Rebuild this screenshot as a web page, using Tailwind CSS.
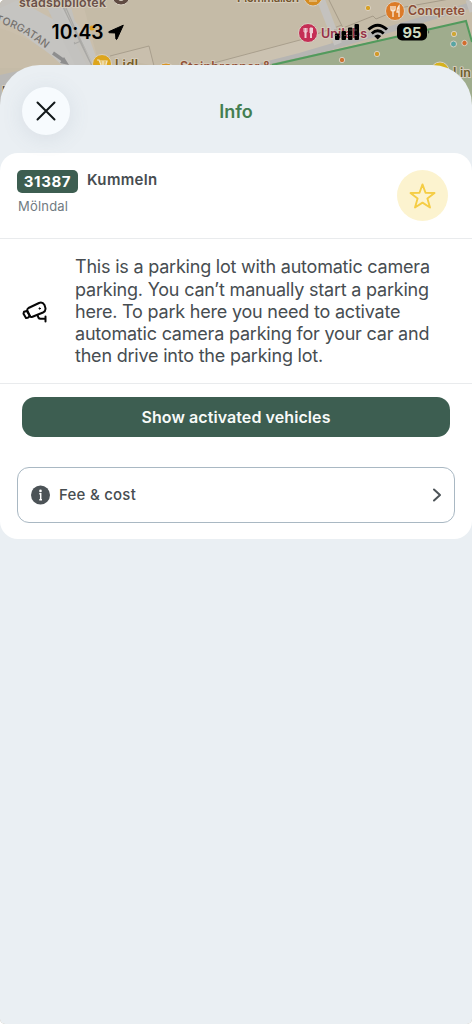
<!DOCTYPE html>
<html lang="en">
<head>
<meta charset="utf-8">
<meta name="viewport" content="width=device-width, initial-scale=1">
<title>Info</title>
<script src="https://cdn.jsdelivr.net/npm/@tailwindcss/browser@4"></script>
</head>
<body class="bg-white font-['Inter','Liberation_Sans',sans-serif]">
<div class="relative w-[472px] h-[1024px] overflow-hidden rounded-[5px] bg-[#c5bba7]">
  <!-- Map behind the sheet -->
  <svg class="absolute inset-0" width="472" height="110" viewBox="0 0 472 110" font-family="Inter, 'Liberation Sans', sans-serif">
    <rect width="472" height="110" fill="#c5bba7"/>
    <path d="M0 0H82L100 68H0Z" fill="#cabfac"/>
    <path d="M0 0H17L22 16L0 20Z" fill="#c5c2bd"/>
    <path d="M18 0L58 22L62 5L90 40L100 68L62 68Q30 36 0 20V8Z" fill="#c5c4c1"/>
    <path d="M58 3L49 15L62 24Z" fill="#c8bda9"/>
    <path d="M0 28Q42 42 64 68H0Z" fill="#c8bda9"/>
    <path d="M0 75Q14 72 30 68V110H0Z" fill="#b9b8b6"/>
    <path d="M50 0L83 68" stroke="#c3c2bf" stroke-width="12" fill="none"/>
    <path d="M61 0L94 68M74 43L81 40" stroke="#aaa9a6" stroke-width="1.5" fill="none"/>
    <path d="M66 0L77 40L92 68" stroke="#c3c1bc" stroke-width="6" fill="none"/>
    <path d="M62 5L90 62M74 44L81 41M66 8L80 40L92 66" stroke="#a9a8a5" stroke-width="1.200" fill="none"/>
    <path d="M110 56L149 46L154 66" stroke="#a99f8d" stroke-width="1" fill="#c9bfad"/>
    <path d="M53 53L63 60" stroke="#8e8e8e" stroke-width="3.400"/><path d="M60 63L69 65L64 57Z" fill="#8e8e8e"/>
    <path d="M210 64L300 40L335 28L330 48L250 66Z" fill="#cbc2b1"/>
    <path d="M210 64L300 40L342 25" stroke="#a99f8d" fill="none"/>
    <path d="M252 68L300 56L472 5" stroke="#b6b5b3" stroke-width="6" fill="none"/>
    <path d="M321 0L338 44" stroke="#c4c2bf" stroke-width="8" fill="none"/>
    <path d="M329 0L343 28L373 16L376 19L405 7L472 -5" stroke="#a59b88" fill="none"/>
    <path d="M466 21L472 42V110H270V64Z" fill="#9fac8d"/>
    <path d="M272 65L466 21L472 42" stroke="#529a5d" stroke-width="2" fill="none"/>
    <path d="M468 0L472 12" stroke="#c4c2bf" stroke-width="5"/>
    <g font-weight="600" stroke="#d5ccbc" stroke-width="2" paint-order="stroke" stroke-linejoin="round">
      <text x="19" y="7" font-size="12.500" fill="#6b5149" textLength="87">stadsbibliotek</text>
      <text x="237" y="2" font-size="12" fill="#72552f" textLength="62">Plommallen</text>
      <text x="115" y="69" font-size="12.500" fill="#765b24" textLength="23">Lidl</text>
      <text x="180" y="71" font-size="12.500" fill="#925136" textLength="91">Steinbrenner &amp;</text>
      <text x="408" y="15" font-size="12.500" fill="#8b4c36" textLength="57">Conqrete</text>
      <text x="321" y="38" font-size="12.500" fill="#962f48" textLength="46">Unilabs</text>
      <text x="453" y="77" font-size="12.500" fill="#705f2d" textLength="18">Lin</text>
      <text x="2" y="94" font-size="11" fill="#555">N</text>
    </g>
    <path id="street" d="M-5 22Q24 29 52 54" fill="none"/>
    <text font-size="10.500" font-weight="500" fill="#77736f"><textPath href="#street" textLength="58">TORGATAN</textPath></text>
    <g stroke="#d8d0c3" stroke-width="1">
      <circle cx="121" cy="-4" r="9" fill="#604b42"/>
      <circle cx="102" cy="64" r="9.500" fill="#dda51c"/>
      <circle cx="166" cy="72" r="9" fill="#d99524"/>
      <circle cx="313" cy="-3" r="9" fill="#d58c22"/>
      <circle cx="308" cy="33" r="9.500" fill="#c52e55"/>
      <circle cx="395" cy="11" r="9.500" fill="#dc7b28"/>
      <circle cx="440" cy="71" r="9" fill="#d5b21e"/>
      <circle cx="368" cy="8" r="2.700" fill="#d8a126"/>
      <circle cx="377" cy="54" r="2.700" fill="#d39a29"/>
      <circle cx="342" cy="60" r="2.700" fill="#cf7433"/>
      <circle cx="454" cy="34" r="2.700" fill="#cfa735"/>
      <circle cx="453.500" cy="44" r="3" fill="#58a5a4"/>
      <circle cx="464.500" cy="43" r="2.700" fill="#d36c2d"/>
    </g>
    <circle cx="92" cy="28" r="2.500" fill="#dda126"/>
    <circle cx="121" cy="-2" r="3" fill="#d8cfc3"/>
    <path d="M97 60H99L101 65H106L107 61H99M100 63H107M103 61V65" stroke="#f2e6c6" stroke-width="1.200" fill="none"/>
    <path d="M308 -1H318M309 1H317" stroke="#f1dcb6" stroke-width="1.200"/>
    <path d="M305.500 28V38M311 28V38" stroke="#efccd4" stroke-width="2"/><path d="M304 28V32H307V28M310 28H312.500V33H310Z" stroke="#efccd4" fill="none"/>
    <path d="M391 6V9Q391 11 393 11Q395 11 395 9V6M393 6V17M399 17V6Q397 8 397 12H399" stroke="#f7e5d3" stroke-width="1.400" fill="none"/>
  </svg>

  <!-- Status bar -->
  <svg class="absolute inset-0" width="472" height="65" viewBox="0 0 472 65" font-family="Inter, 'Liberation Sans', sans-serif">
    <text x="51.500" y="39.200" font-size="19.800" font-weight="600" textLength="52" lengthAdjust="spacingAndGlyphs">10:43</text>
    <path d="M123.300 25.200L109 31.600Q108.200 32.300 109.200 32.700L115.500 33L115.900 39Q116.400 40 117 39Z" stroke="#000" stroke-width="1" stroke-linejoin="round"/>
    <g>
      <rect x="335" y="33.500" width="4.500" height="6.500" rx="1"/><rect x="341.500" y="31" width="4.500" height="9" rx="1"/><rect x="348" y="27.500" width="4.500" height="12.500" rx="1"/><rect x="354.500" y="24" width="4.500" height="16" rx="1"/>
      <path d="M334 30H359M334 35.500H359" stroke="#9d8575" stroke-width=".5" stroke-dasharray="3 2"/>
    </g>
    <path d="M368.500 29.500Q377.700 21 387 29.500" fill="none" stroke="#000" stroke-width="3"/>
    <path d="M371.800 33.500Q377.700 28 383.700 33.500" fill="none" stroke="#000" stroke-width="2.800"/>
    <path d="M374.200 36Q377.700 33 381.200 36L377.700 39.500Z"/>
    <rect x="397" y="23.500" width="30" height="17" rx="5"/><path d="M428.500 30V34Q430 32 428.500 30Z"/>
    <text x="402.500" y="37.500" font-size="15" font-weight="700" fill="#cfdcc2" textLength="19" lengthAdjust="spacingAndGlyphs">95</text>
  </svg>

  <!-- Sheet -->
  <main class="relative mt-[65px] h-[959px] rounded-t-[40px] bg-[#eaeff3] overflow-hidden text-[#474d51]">
    <header class="grid h-[88px] grid-cols-[1fr_auto_1fr] items-center pl-[22px] pr-[22px] pt-1">
      <button aria-label="Close" class="flex size-12 items-center justify-center rounded-full bg-[#f7fbfe] shadow-[0_3px_22px_rgba(90,115,140,0.13)]">
        <svg width="20" height="20" viewBox="0 0 20 20" fill="none" stroke="#111719" stroke-width="2" stroke-linecap="round"><path d="M1.500 1.500L18.500 18.500M18.500 1.500L1.500 18.500"/></svg>
      </button>
      <h1 class="pt-0.5 text-[18px] font-semibold leading-6 text-[#447e51]">Info</h1>
      <span></span>
    </header>

    <section class="h-[386px] rounded-[18px] bg-white">
      <div class="flex h-[86px] justify-between border-b border-[#e9ebed] pl-[17px] pr-6 pt-[17px]">
        <div>
          <div class="flex gap-[9px]">
            <span class="flex h-[23px] w-[61px] items-center justify-center rounded-[5px] bg-[#3d5e51] pt-px text-[15px] font-bold tracking-[0.6px] text-white">31387</span>
            <span class="text-[15px] font-semibold leading-5 tracking-[0.33px]">Kummeln</span>
          </div>
          <p class="mt-1 pl-px text-[13px] leading-[18px] tracking-[0.2px] text-[#717b82]">Mölndal</p>
        </div>
        <div class="flex size-[51px] items-center justify-center rounded-full bg-[#fcf3cf]">
          <svg width="28" height="28" viewBox="0 0 28 28" fill="none" stroke="#f5cd45" stroke-width="1.900" stroke-linejoin="round"><path d="M13.500 2.400L16.500 10.700L25.500 11L18.400 16.500L21 25.500L13.500 20.600L6 25.500L8.600 16.500L1.500 11L10.500 10.700Z"/></svg>
        </div>
      </div>

      <div class="flex h-[145px] items-center border-b border-[#e9ebed] pl-[22px]">
        <svg class="mt-0.5 shrink-0" width="26" height="22" viewBox="0 0 26 22" fill="none" stroke="#080808" stroke-width="2" stroke-linecap="round" stroke-linejoin="round">
          <path d="M5.300 9.500Q5 8 6.500 7L17 2Q20.500.600 22.500 4L23.400 7Q24 10 21 11.500L10.500 15.800Q8.800 16.500 8 15.500Z"/>
          <path d="M4.800 10L2 10.800L1.500 12.700L4 17L5.800 16.800L8 15M4.800 10L8 15M15.500 14L16.500 16.800Q17 17.800 18.500 17.800H22.500M23.500 15.500V20.500"/>
          <circle cx="17.700" cy="7.500" r=".7" fill="#080808" stroke-width="1"/>
        </svg>
        <p class="ml-[27px] whitespace-nowrap pt-0.5 text-[18px] leading-[22.200px] tracking-[-0.210px]">This is a parking lot with automatic camera<br>parking. You can’t manually start a parking<br>here. To park here you need to activate<br>automatic camera parking for your car and<br>then drive into the parking lot.</p>
      </div>

      <div class="px-[22px] pt-[13px]">
        <button class="h-10 w-full rounded-[13px] bg-[#3d5e51] text-[16px] font-semibold tracking-[0.08px] text-[#f7faf8]">Show activated vehicles</button>
      </div>
      <div class="mt-[30px] px-[17px]">
        <div class="flex h-[56px] items-center rounded-[12px] border-[1.500px] border-[#a9b8c3] pl-[12px] pr-[12px]">
          <svg width="20" height="20" viewBox="0 0 20 20"><circle cx="10.500" cy="10" r="9.500" fill="#4c5357"/><circle cx="10.500" cy="5.900" r="1.300" fill="#fff"/><path d="M9.300 8.800H10.700V14.800M9.300 14.800H12" stroke="#fff" stroke-width="1.500" fill="none"/></svg>
          <span class="ml-[9px] text-[15px] font-medium tracking-[0.24px]">Fee &amp; cost</span>
          <svg class="ml-auto" width="10" height="14" viewBox="0 0 10 14" fill="none" stroke="#4c5357" stroke-width="2" stroke-linecap="round" stroke-linejoin="round"><path d="M2 1.500L8 7L2 12.500"/></svg>
        </div>
      </div>
    </section>
  </main>
</div>
</body>
</html>
